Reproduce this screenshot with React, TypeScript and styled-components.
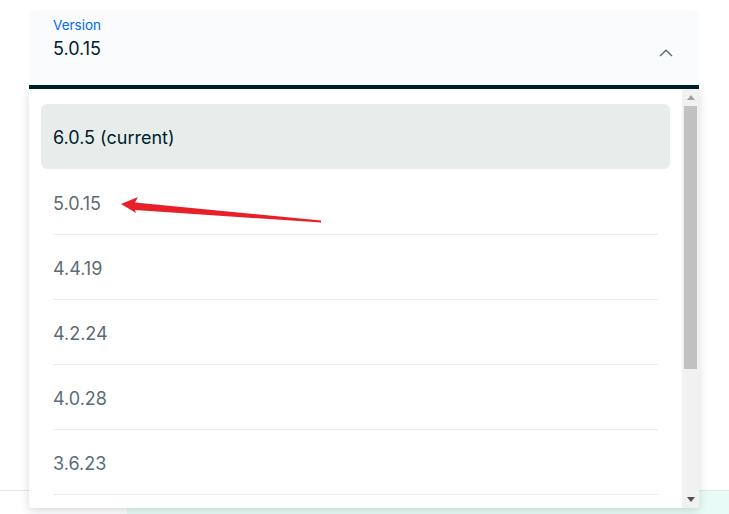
import React from "react";
import styled, { createGlobalStyle } from "styled-components";

const Global = createGlobalStyle`
  html, body { margin: 0; padding: 0; background: #ffffff; }
  body { font-family: "Inter", "Lato", "Noto Sans", sans-serif; }
  * { box-sizing: border-box; }
`;

const Page = styled.div`
  position: relative;
  width: 729px;
  height: 514px;
  overflow: hidden;
  background: #ffffff;
`;

const Backdrop = styled.div`
  position: absolute;
  left: 0;
  right: 0;
  top: 490px;
  bottom: 0;
  border-top: 1px solid #e4e6e8;
  display: flex;
`;

const FooterBlank = styled.div`
  width: 127px;
  background: #ffffff;
`;

const FooterMint = styled.div`
  flex: 1;
  background: #e9fbf6;
`;

const SelectWrap = styled.div`
  position: relative;
  margin: 10px 0 0 29px;
  width: 670px;
  z-index: 1;
`;

const Trigger = styled.div`
  display: flex;
  align-items: flex-start;
  justify-content: space-between;
  height: 79px;
  padding: 7px 24px 0 24px;
  background: #f9fbfc;
  border-radius: 6px 6px 0 0;
  border-bottom: 4px solid #001e2b;
`;

const TriggerText = styled.div`
  display: flex;
  flex-direction: column;
`;

const Label = styled.span`
  font-size: 13.5px;
  line-height: 16px;
  color: #016bf8;
`;

const Value = styled.span`
  margin-top: 4px;
  font-size: 18px;
  line-height: 24px;
  color: #001e2b;
`;

const Chevron = styled.svg`
  margin-top: 32px;
  margin-right: 2px;
`;

const Panel = styled.div`
  display: flex;
  height: 419px;
  background: #ffffff;
  border-radius: 0 0 4px 4px;
  box-shadow: 0 3px 10px rgba(0, 30, 43, 0.16);
  overflow: hidden;
`;

const List = styled.ul`
  flex: 1;
  list-style: none;
  margin: 0;
  padding: 15px 12px 0 12px;
  overflow: hidden;
`;

const Item = styled.li<{ $active?: boolean }>`
  height: 65px;
  padding: 0 12px;
  border-radius: 6px;
  background: ${(p) => (p.$active ? "#e8edeb" : "transparent")};
  margin-bottom: ${(p) => (p.$active ? "1px" : "0")};
`;

const ItemInner = styled.div<{ $active?: boolean }>`
  height: 100%;
  display: flex;
  align-items: center;
  padding-top: 2px;
  font-size: 18px;
  color: ${(p) => (p.$active ? "#001e2b" : "#5c6c75")};
  border-bottom: 1px solid ${(p) => (p.$active ? "transparent" : "#e7eeec")};
`;

const Scrollbar = styled.div`
  width: 17px;
  background: #f1f1f1;
  display: flex;
  flex-direction: column;
  align-items: center;
`;

const ArrowBtn = styled.div`
  height: 17px;
  width: 17px;
  display: flex;
  align-items: center;
  justify-content: center;
`;

const Thumb = styled.div`
  width: 13px;
  height: 263px;
  background: #c1c1c1;
`;

const Spacer = styled.div`
  flex: 1;
`;

const Annotation = styled.svg`
  position: absolute;
  left: 0;
  top: 0;
  pointer-events: none;
  z-index: 2;
`;

const versions = ["6.0.5 (current)", "5.0.15", "4.4.19", "4.2.24", "4.0.28", "3.6.23"];

export default function App() {
  return (
    <Page>
      <Global />
      <Backdrop>
        <FooterBlank />
        <FooterMint />
      </Backdrop>
      <SelectWrap>
        <Trigger>
          <TriggerText>
            <Label>Version</Label>
            <Value>5.0.15</Value>
          </TriggerText>
          <Chevron width="14" height="8" viewBox="0 0 14 8">
            <path d="M1 7 L7 1.2 L13 7" fill="none" stroke="#5c6c75" strokeWidth="1.4" />
          </Chevron>
        </Trigger>
        <Panel>
          <List>
            {versions.map((v, i) => (
              <Item key={v} $active={i === 0}>
                <ItemInner $active={i === 0}>{v}</ItemInner>
              </Item>
            ))}
          </List>
          <Scrollbar>
            <ArrowBtn>
              <svg width="8" height="5" viewBox="0 0 8 5">
                <path d="M0 5 L4 0 L8 5 Z" fill="#a3a3a3" />
              </svg>
            </ArrowBtn>
            <Thumb />
            <Spacer />
            <ArrowBtn>
              <svg width="8" height="5" viewBox="0 0 8 5">
                <path d="M0 0 L8 0 L4 5 Z" fill="#505050" />
              </svg>
            </ArrowBtn>
          </Scrollbar>
        </Panel>
      </SelectWrap>
      <Annotation width="729" height="514" viewBox="0 0 729 514">
        <polygon
          points="121,204 138,197 135,202.5 321,220.5 321,222.5 135,210 136,213"
          fill="#e8202a"
        />
      </Annotation>
    </Page>
  );
}
